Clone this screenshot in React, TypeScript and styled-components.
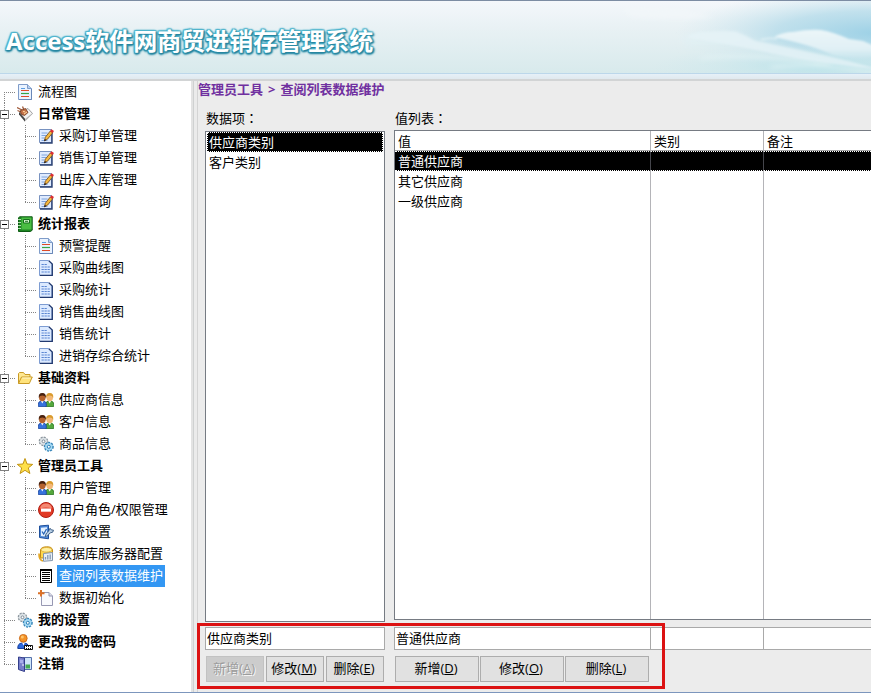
import React, { useState } from "react";
import styled, { createGlobalStyle, css } from "styled-components";

const GlobalStyle = createGlobalStyle`
  *, *::before, *::after { box-sizing: border-box; }
  body {
    margin: 0;
    background: #ececec;
    color: #000;
    font-family: "Open Sans", "Noto Sans CJK SC", sans-serif;
    font-size: 13px;
    line-height: 20px;
  }
  button, input { font: inherit; color: inherit; }
`;

/* ---------- shell ---------- */

const Page = styled.div`
  display: flex;
  flex-direction: column;
  min-height: 100vh;
  border-bottom: 1px solid #7c96bd;
`;

const Header = styled.header`
  position: relative;
  height: 81px;
  padding: 24px 6px 0;
  overflow: hidden;
  border-top: 1px solid #7c8ca3;
  border-bottom: 2px solid #d2d4d5;
  background: linear-gradient(#f4f7fb 0, #e8f1f4 28px, #d8eaec 72px, #bcd7ea 72px, #bcd7ea 73px, #e6f0f8 73px, #e0e9ee 78px);
`;

const Sky = styled.svg`
  position: absolute;
  top: 0;
  right: 0;
  width: 300px;
  height: 72px;
`;

const Title = styled.h1`
  position: relative;
  margin: 0;
  font-size: 24px;
  font-weight: 700;
  line-height: 32px;
  white-space: nowrap;
  color: #fff;
  text-shadow: 1px 1px 1px #27859f, -1px -1px 1px #4fb4cd, 1px -1px 1px #4fb4cd,
    -1px 1px 1px #2f93ae, 0 2px 2px #2a8aa5, 2px 1px 2px #2a8aa5, 0 0 3px #52b6ce,
    0 0 2px #3fa4be;
`;

const Body = styled.div`
  flex: 1;
  display: grid;
  grid-template-columns: 191px 7px minmax(0, 1fr);
`;

const Sidebar = styled.nav`
  background: #fff;
`;

const Splitter = styled.div`
  background: linear-gradient(90deg, #e3e3e3 2px, #cfd1d1 2px, #cfd1d1 3px, #ebebeb 3px, #ebebeb 6px, #d4d4d4 6px);
`;

const Main = styled.main`
  display: flex;
  flex-direction: column;
  padding-bottom: 10px;
`;

/* ---------- tree ---------- */

const TreeList = styled.ul`
  margin: 0;
  padding: 0;
  list-style: none;
`;

const TreeRow = styled.div`
  display: flex;
  align-items: center;
  height: 22px;
`;

type Line = "first" | "mid" | "last" | "through" | "none";

const dotsDown = "repeating-linear-gradient(#848484 0 1px, transparent 1px 2px)";
const dotsAcross = "repeating-linear-gradient(90deg, #848484 0 1px, transparent 1px 2px)";

const Guide = styled.span<{ $line: Line; $child?: boolean }>`
  flex: none;
  display: flex;
  align-items: center;
  width: ${(p) => (p.$child ? 21 : 17)}px;
  height: 22px;
  ${(p) => {
    if (p.$line === "none") return "";
    const x = p.$child ? 8 : 4;
    const top = p.$line === "first" ? 11 : 0;
    const size = p.$line === "first" || p.$line === "last" ? 11 : 22;
    const down = `${dotsDown} ${x}px ${top}px / 1px ${size}px no-repeat`;
    const across = `${dotsAcross} ${x}px 11px / 12px 1px no-repeat`;
    return `background: ${p.$line === "through" ? down : `${down}, ${across}`};`;
  }}
`;

const Toggle = styled.button`
  display: grid;
  place-items: center;
  width: 9px;
  height: 9px;
  padding: 0;
  border: 1px solid #808080;
  background: #fff;
  &::before {
    content: "";
    width: 5px;
    height: 1px;
    background: #000;
  }
`;

const TreeLink = styled.a<{ $bold?: boolean; $active?: boolean }>`
  display: flex;
  align-items: center;
  gap: 3px;
  color: #000;
  font-weight: ${(p) => (p.$bold ? 700 : 400)};
  white-space: nowrap;
  text-decoration: none;
  span {
    height: 22px;
    padding: 0 2px;
    line-height: 20px;
    ${(p) => p.$active && css`background: #3397f3; color: #fff;`}
  }
`;

const Glyph = styled.svg`
  flex: none;
  width: 16px;
  height: 16px;
`;

/* ---------- content ---------- */

const Crumbs = styled.div`
  display: flex;
  gap: 5px;
  height: 17px;
  line-height: 16px;
  font-weight: 700;
  color: #7030a0;
`;

const Columns = styled.div`
  flex: 1;
  display: grid;
  grid-template-columns: 180px minmax(0, 1fr);
  column-gap: 9px;
  padding: 10px 0 0 7px;
`;

const Column = styled.section`
  display: flex;
  flex-direction: column;
`;

const Caption = styled.h2`
  margin: 0;
  padding-left: 1px;
  font-family: "Open Sans", "Noto Sans CJK TC", sans-serif;
  font-size: 13px;
  font-weight: 400;
  line-height: 20px;
`;

const ListBox = styled.ul`
  flex: 1;
  margin: 3px 0 0;
  padding: 0 1px;
  list-style: none;
  border: 1px solid #767b83;
  background: #fff;
`;

const ListItem = styled.button<{ $active: boolean }>`
  display: block;
  width: 100%;
  height: 20px;
  padding: 0 1px;
  border: 1px dotted ${(p) => (p.$active ? "#fff" : "transparent")};
  background: ${(p) => (p.$active ? "#000" : "#fff")};
  color: ${(p) => (p.$active ? "#fff" : "#000")};
  line-height: 18px;
  text-align: left;
`;

const TableBox = styled.div`
  flex: 1;
  display: flex;
  margin: 2px 0;
  border: solid #767b83;
  border-width: 1px 0 1px 1px;
  background: #fff;
`;

const Table = styled.table`
  width: 100%;
  table-layout: fixed;
  border-spacing: 0;
  th, td {
    padding: 0 3px;
    border-right: 1px solid #b4b4b8;
    font-weight: 400;
    text-align: left;
  }
  th:last-child, td:last-child { border-right: 0; }
  th { height: 20px; border-bottom: 1px solid #a8a8a8; line-height: 18px; }
`;

const Col = styled.col<{ $width?: number }>`
  ${(p) => p.$width && `width: ${p.$width}px;`}
`;

const Row = styled.tr<{ $active: boolean }>`
  height: 20px;
  cursor: default;
  td { line-height: 18px; }
  ${(p) =>
    p.$active &&
    css`
      background: #000;
      color: #fff;
      td { border-right-color: #45464c; border-top: 1px dotted #fff; border-bottom: 1px dotted #fff; }
    `}
`;

const Editor = styled.form`
  position: relative;
  display: grid;
  grid-template-columns: 180px minmax(0, 1fr);
  column-gap: 9px;
  row-gap: 6px;
  padding: 5px 0 0 7px;
`;

const Highlight = styled.div`
  position: absolute;
  top: 1px;
  left: -1px;
  width: 468px;
  height: 66px;
  border: 3px solid #dc1212;
  pointer-events: none;
`;

const Field = styled.input`
  min-width: 0;
  width: 100%;
  height: 23px;
  padding: 0 1px 2px;
  border: 1px solid #a9a9a9;
  border-radius: 0;
  outline: 0;
  background: #fff;
`;

const FieldRow = styled.div`
  display: grid;
  grid-template-columns: 257px 113px minmax(0, 1fr);
  ${Field} + ${Field} { border-left: 0; }
  ${Field}:last-child { border-right: 0; }
`;

const Buttons = styled.div<{ $size: number; $gap: number }>`
  display: grid;
  grid-template-columns: repeat(3, ${(p) => p.$size}px);
  column-gap: ${(p) => p.$gap}px;
  padding-left: 1px;
`;

const Button = styled.button`
  height: 26px;
  padding: 0 2px 2px 0;
  border: 1px solid #adadad;
  background: #e1e1e1;
  line-height: 20px;
  white-space: nowrap;
  &:disabled {
    border-color: #c2c2c2;
    background: #cccccc;
    color: #9c9c9c;
    text-shadow: 1px 1px 0 #f4f4f4;
  }
`;

/* ---------- icons ---------- */

const Person = ({ x, hair, skin, shirt, edge }: { x: number; hair: string; skin: string; shirt: string; edge: string }) => (
  <g transform={`translate(${x} 0)`}>
    <path d="M0.5 14.5V12q0-2.5 2.8-3h2.4q2.8.5 2.8 3v2.5z" fill={shirt} stroke={edge} strokeWidth=".8" />
    <path d="M3.2 9 4.5 11.5 5.8 9z" fill="#fff" />
    <ellipse cx="4.5" cy="5.4" rx="3.3" ry="3.8" fill={skin} />
    <path d="M1 6Q.4 1 4.5 1T8 6Q7.200 3.600 4.500 3.600T1 6z" fill={hair} />
  </g>
);

const page = (
  <>
    <path d="M1.500.5h9l4 4v11h-13z" fill="#eaf3ff" stroke="#7f9cc9" />
    <path d="M10.500.5v4h4" fill="#b9d0ee" stroke="#7f9cc9" />
  </>
);

const gears = (
  <>
    <circle cx="5.5" cy="5.3" r="4" fill="#d5dbe0" stroke="#8d979f" strokeWidth="1.6" strokeDasharray="2 1.1" />
    <circle cx="5.5" cy="5.3" r="3.4" fill="#dfe5e9" />
    <circle cx="5.5" cy="5.3" r="1.4" fill="#fff" stroke="#7e8b96" />
    <circle cx="10.8" cy="10.8" r="4.2" fill="#8fc8ea" stroke="#3685b8" strokeWidth="1.6" strokeDasharray="2 1.1" />
    <circle cx="10.8" cy="10.8" r="3.5" fill="#a5daf5" />
    <circle cx="10.8" cy="10.8" r="1.5" fill="#fff" stroke="#2d7eb4" />
  </>
);

const icons: Record<string, React.ReactNode> = {
  flow: (
    <>
      {page}
      <path d="M4 4.500h4" stroke="#5b9be0" />
      <path d="M4 6.500h8M4 12.500h8" stroke="#de4b28" strokeWidth="1.2" />
      <path d="M4 9.500h8" stroke="#35a545" strokeWidth="1.2" />
      <path d="M2 15.500h12.500V5" fill="none" stroke="#6a88b8" />
    </>
  ),
  daily: (
    <>
      <path d="M2.500 6 11 2.500l4.500 5L8.500 14z" fill="#f3f3f3" stroke="#8a8a8a" strokeWidth=".8" />
      <path d="M2 6v2.500L8 15.800V13z" fill="#444" />
      <path d="M8 15.600 15.500 8v-.8L8 13z" fill="#bcbcbc" />
      <path d="M0 1.500 5 4M5.500.5 7 4M.5 4.500 4 6" stroke="#a05a3a" strokeWidth="1.300" />
      <path d="M3.500 4.500 8.500 2.500 11 6.500 7.500 9.500 4 8z" fill="#c7764c" stroke="#6c3218" strokeWidth=".8" />
      <path d="m6 5.500 2 .3M7 8l3-2" stroke="#ffd9a1" />
    </>
  ),
  edit: (
    <>
      <path d="M1.500 1.500h12v13h-12z" fill="#dfebff" stroke="#7892c0" />
      <path d="M2 15h12V4" fill="none" stroke="#2b4172" strokeWidth="1.400" />
      <path d="M3.500 5h6M3.500 7.500h5M3.500 10h3M3.500 12.500h6" stroke="#7fa4dc" />
      <path d="m6.500 12.800.8-3.600 5-6.200 2.400 1.700-5.200 6.500z" fill="#f6b93c" stroke="#69431b" strokeWidth=".8" />
      <path d="m12 3.200 1.400-2 2.600 1.900-1.500 2z" fill="#dc2c31" />
      <path d="m6.200 13.300.6-2.300 1.400 1.100z" fill="#111" />
    </>
  ),
  book: (
    <>
      <path d="M2.500.8h12.700v13.400L13.500 15.500H1.500V2z" fill="#1d8422" stroke="#0d5b13" />
      <path d="M4.500 1.500h10v12h-10z" fill="#49bd42" />
      <path d="M6.500 3.500h6v3.500h-6z" fill="#d9f6d3" stroke="#14701c" />
      <path d="M8 5.300h3" stroke="#14701c" />
      <path d="M1 3.500h3M1 6.500h3M1 9.500h3M1 12.500h3" stroke="#c7e9c4" strokeWidth=".9" />
    </>
  ),
  report: (
    <>
      <path d="M1.500.5h9l3.500 3.500v11.500h-12.500z" fill="#dceaff" stroke="#7d9cd2" />
      <path d="M2 15.300h12.300V4L10.800.8" fill="none" stroke="#223a70" strokeWidth="1.300" />
      <path d="M3.500 4.500h6M3.500 7h9M3.500 9.500h9M3.500 12h9" stroke="#5b86d2" strokeDasharray="2.300 .7" strokeWidth="1.100" />
    </>
  ),
  folder: (
    <>
      <path d="M1.500 13.500v-10l1-1h4l1.500 2h5v3" fill="#ffe892" stroke="#c99a25" />
      <path d="m1.500 13.500 3-6.500h10.800l-3 6.500z" fill="#ffe37c" stroke="#c99a25" />
      <path d="M5.200 8h8.500" stroke="#fff7cf" />
    </>
  ),
  users: (
    <>
      <Person x={7.2} hair="#d99b2d" skin="#f3b878" shirt="#54a83c" edge="#2b7722" />
      <Person x={-0.2} hair="#47210f" skin="#b5622e" shirt="#3672dd" edge="#1c469f" />
    </>
  ),
  gears,
  star: (
    <path d="m8 .5 2 5.500 5.700.4-4.400 3.500 1.600 5.600L8 12.300l-4.900 3.200 1.600-5.600L.3 6.400 6 6z" fill="#ffe04a" stroke="#c29413" strokeLinejoin="round" />
  ),
  deny: (
    <>
      <circle cx="8" cy="8" r="7.500" fill="#e23a25" stroke="#b01d12" />
      <path d="M2 6.500Q3 1.600 8 1.600T14 6.500Q8 4.500 2 6.500z" fill="#f48872" />
      <path d="M3 6.500h10v3.200H3z" fill="#fff" />
    </>
  ),
  settings: (
    <>
      <path d="M1.500 2 10.500 1.200v13.600L1.500 13.500z" fill="#4d88d8" stroke="#1d4f9c" />
      <path d="M3 3.800l6-.6v9.600L3 12z" fill="#e4f1ff" />
      <path d="m4 7.500 1.700 2.500L8.500 5" fill="none" stroke="#2865b5" strokeWidth="1.300" />
      <path d="m7 12.500 1.500-3.500 3-2.800.5-2 1.200 1.600 2.300.4-.8 2-2.400.6-3 3.200z" fill="#b9d0e6" stroke="#34577f" strokeWidth=".9" />
    </>
  ),
  database: (
    <>
      <path d="M2.500 4Q3 1 8.500.8T14.500 4v8H2.500z" fill="#ffd84c" stroke="#c18b18" />
      <ellipse cx="8.500" cy="3.800" rx="5.500" ry="2.300" fill="#fff0a0" stroke="#d5a12b" strokeWidth=".7" />
      <path d="M1 7.500Q1 14.500 5 15" fill="none" stroke="#e4a726" strokeWidth="1.700" />
      <path d="M5.500 7.500 14.500 6.500v8l-9 .8z" fill="#e8eef5" stroke="#8395ab" />
      <path d="M7.500 13.500V11M9.800 13.500V9M12.200 13.500V8.500" stroke="#8499b4" strokeWidth="1.300" />
    </>
  ),
  list: (
    <>
      <path d="M2.500 1.500h11v13h-11z" fill="#fff" stroke="#000" />
      <path d="M2 2h12" stroke="#000" strokeWidth="2" />
      <path d="M4 4.500h8M4 6.500h8M4 8.500h8M4 10.500h8M4 12.500h8" stroke="#000" />
    </>
  ),
  fresh: (
    <>
      <path d="M3.500 2.500h7.500l3.500 3.500v9.500h-11z" fill="#f9fafe" stroke="#9798b3" />
      <path d="M11 2.500V6h3.500" fill="#dcdce9" stroke="#9798b3" />
      <path d="M3 0v6.500M0 3.200h6.500" stroke="#dc7128" strokeWidth="2" />
    </>
  ),
  password: (
    <>
      <path d="M.8 14.500q-.3-5 4-5.500h3q3.200.5 3.500 3v2.500z" fill="#2b67dd" stroke="#173f9a" />
      <path d="m5 8.500 1.500 3 1.500-3z" fill="#fff" />
      <circle cx="6.300" cy="4.300" r="3.900" fill="#f39328" stroke="#c5600c" strokeWidth=".8" />
      <circle cx="5.300" cy="3" r="1.500" fill="#ffc56b" />
      <path d="M7.500 11.500h8v4h-8z" fill="#fff" stroke="#111" />
      <path d="M9 12.500h6M9 14.500h6" stroke="#111" strokeDasharray="1 1" />
    </>
  ),
  logout: (
    <>
      <path d="M6.500 1.500h8v12h-8z" fill="#cfe5fa" stroke="#5470aa" />
      <path d="M8.500 8.500h4.500v4H8.500z" fill="#43a952" />
      <path d="m1.500 1 6 1v13.500l-6-2z" fill="#777fca" stroke="#343e8b" />
      <path d="m3 3.500 3 .5v3.500L3 7z" fill="#a8aeea" />
      <path d="M6 8v2" stroke="#fff" />
    </>
  ),
};

const Icon = ({ name }: { name: string }) => (
  <Glyph viewBox="0 0 16 16" aria-hidden="true">
    {icons[name]}
  </Glyph>
);

const Clouds = () => (
  <Sky viewBox="0 0 300 72" preserveAspectRatio="none" aria-hidden="true">
    <defs>
      <radialGradient id="blue" gradientUnits="userSpaceOnUse" cx="0" cy="0" r="1" gradientTransform="translate(305 32) scale(200 44)">
        <stop offset="0" stopColor="#9dd1e6" />
        <stop offset=".5" stopColor="#b2dae9" stopOpacity=".75" />
        <stop offset="1" stopColor="#cfe7ee" stopOpacity="0" />
      </radialGradient>
      <radialGradient id="teal" gradientUnits="userSpaceOnUse" cx="0" cy="0" r="1" gradientTransform="translate(250 66) scale(170 22)">
        <stop offset="0" stopColor="#b9e2e9" />
        <stop offset="1" stopColor="#cfe9ee" stopOpacity="0" />
      </radialGradient>
      <linearGradient id="cloud" gradientUnits="userSpaceOnUse" x1="0" x2="0" y1="28" y2="60">
        <stop offset="0" stopColor="#e6f2f6" />
        <stop offset="1" stopColor="#d9edf0" stopOpacity="0" />
      </linearGradient>
      <linearGradient id="crest" gradientUnits="userSpaceOnUse" x1="0" x2="0" y1="28" y2="62">
        <stop offset="0" stopColor="#ecf6f9" />
        <stop offset=".6" stopColor="#e0f0f5" />
        <stop offset="1" stopColor="#d2eaf0" stopOpacity="0" />
      </linearGradient>
      <filter id="soft" x="-10%" y="-20%" width="120%" height="140%">
        <feGaussianBlur stdDeviation="1" />
      </filter>
      <filter id="mist" x="-20%" y="-40%" width="140%" height="180%">
        <feGaussianBlur stdDeviation="3 2" />
      </filter>
    </defs>
    <path d="M0 0h300v72H0z" fill="url(#blue)" />
    <path d="M0 44h300v28H0z" fill="url(#teal)" />
    <g filter="url(#mist)">
      <path d="M50 6Q100 2 142 16Q110 20 60 16z" fill="#f2f7f9" opacity=".7" />
      <path d="M110 36Q120 31 140 32L165 31L184 40Q230 48 306 68H120z" fill="url(#cloud)" />
      <path d="M130 57Q190 52 260 64M200 66Q250 62 306 72" fill="none" stroke="#e4f3f5" strokeWidth="3" opacity=".7" />
    </g>
    <g filter="url(#soft)">
      <path d="M116 36Q124 31 134 31Q152 29 165 31Q176 35 184 40Q220 47 256 55Q280 60 306 68Q240 62 190 50Q150 42 116 36z" fill="#e6f3f7" opacity=".75" />
      <path d="M203 36Q212 31 222 31Q238 28 250 29Q262 31 278 38L292 40L306 46V56Q280 58 262 54Q240 44 203 36z" fill="url(#crest)" />
      <path d="M190 39Q198 36 206 38" fill="none" stroke="#e6f3f7" strokeWidth="2" opacity=".6" />
    </g>
  </Sky>
);

/* ---------- data ---------- */

type Node = { label: string; icon: string; bold?: boolean; children?: Node[] };

const tree: Node[] = [
  { label: "流程图", icon: "flow" },
  {
    label: "日常管理", icon: "daily", bold: true,
    children: ["采购订单管理", "销售订单管理", "出库入库管理", "库存查询"].map((label) => ({ label, icon: "edit" })),
  },
  {
    label: "统计报表", icon: "book", bold: true,
    children: [
      { label: "预警提醒", icon: "flow" },
      { label: "采购曲线图", icon: "report" },
      { label: "采购统计", icon: "report" },
      { label: "销售曲线图", icon: "report" },
      { label: "销售统计", icon: "report" },
      { label: "进销存综合统计", icon: "report" },
    ],
  },
  {
    label: "基础资料", icon: "folder", bold: true,
    children: [
      { label: "供应商信息", icon: "users" },
      { label: "客户信息", icon: "users" },
      { label: "商品信息", icon: "gears" },
    ],
  },
  {
    label: "管理员工具", icon: "star", bold: true,
    children: [
      { label: "用户管理", icon: "users" },
      { label: "用户角色/权限管理", icon: "deny" },
      { label: "系统设置", icon: "settings" },
      { label: "数据库服务器配置", icon: "database" },
      { label: "查阅列表数据维护", icon: "list" },
      { label: "数据初始化", icon: "fresh" },
    ],
  },
  { label: "我的设置", icon: "gears", bold: true },
  { label: "更改我的密码", icon: "password", bold: true },
  { label: "注销", icon: "logout", bold: true },
];

const categories = ["供应商类别", "客户类别"];
const values = ["普通供应商", "其它供应商", "一级供应商"];

const Tree = () => {
  const [closed, setClosed] = useState<string[]>([]);
  const [active, setActive] = useState("查阅列表数据维护");
  const flip = (label: string) =>
    setClosed((c) => (c.includes(label) ? c.filter((l) => l !== label) : [...c, label]));
  const link = (node: Node) => (
    <TreeLink
      href="#"
      $bold={node.bold}
      $active={active === node.label}
      aria-current={active === node.label ? "page" : undefined}
      onClick={() => setActive(node.label)}
    >
      <Icon name={node.icon} />
      <span>{node.label}</span>
    </TreeLink>
  );
  return (
    <TreeList>
      {tree.map((node, i) => {
        const line: Line = i === 0 ? "first" : i === tree.length - 1 ? "last" : "mid";
        const open = node.children && !closed.includes(node.label);
        return (
          <li key={node.label}>
            <TreeRow>
              <Guide $line={line}>
                {node.children && (
                  <Toggle type="button" aria-label={node.label} aria-expanded={open} onClick={() => flip(node.label)} />
                )}
              </Guide>
              {link(node)}
            </TreeRow>
            {open && (
              <TreeList>
                {node.children!.map((child, j) => (
                  <li key={child.label}>
                    <TreeRow>
                      <Guide $line={line === "last" ? "none" : "through"} />
                      <Guide $child $line={j === node.children!.length - 1 ? "last" : "mid"} />
                      {link(child)}
                    </TreeRow>
                  </li>
                ))}
              </TreeList>
            )}
          </li>
        );
      })}
    </TreeList>
  );
};

const Command = ({ text, hotkey, disabled }: { text: string; hotkey: string; disabled?: boolean }) => (
  <Button type="button" disabled={disabled} accessKey={hotkey.toLowerCase()}>
    {text}(<u>{hotkey}</u>)
  </Button>
);

export default function App() {
  const [category, setCategory] = useState(categories[0]);
  const [value, setValue] = useState(values[0]);
  return (
    <>
      <GlobalStyle />
      <Page>
        <Header>
          <Clouds />
          <Title>Access软件网商贸进销存管理系统</Title>
        </Header>
        <Body>
          <Sidebar>
            <Tree />
          </Sidebar>
          <Splitter />
          <Main>
            <Crumbs>
              <span>管理员工具</span>
              <span>&gt;</span>
              <span>查阅列表数据维护</span>
            </Crumbs>
            <Columns>
              <Column>
                <Caption>数据项：</Caption>
                <ListBox>
                  {categories.map((c) => (
                    <li key={c}>
                      <ListItem type="button" $active={c === category} onClick={() => setCategory(c)}>
                        {c}
                      </ListItem>
                    </li>
                  ))}
                </ListBox>
              </Column>
              <Column>
                <Caption>值列表：</Caption>
                <TableBox>
                  <Table>
                    <colgroup>
                      <Col $width={256} />
                      <Col $width={113} />
                      <Col />
                    </colgroup>
                    <thead>
                      <tr>
                        <th>值</th>
                        <th>类别</th>
                        <th>备注</th>
                      </tr>
                    </thead>
                    <tbody>
                      {values.map((v) => (
                        <Row key={v} $active={v === value} onClick={() => setValue(v)}>
                          <td>{v}</td>
                          <td />
                          <td />
                        </Row>
                      ))}
                      <tr>
                        <td />
                        <td />
                        <td />
                      </tr>
                    </tbody>
                  </Table>
                </TableBox>
              </Column>
            </Columns>
            <Editor>
              <Field aria-label="数据项" value={category} onChange={(e) => setCategory(e.target.value)} />
              <FieldRow>
                <Field aria-label="值" value={value} onChange={(e) => setValue(e.target.value)} />
                <Field aria-label="类别" />
                <Field aria-label="备注" />
              </FieldRow>
              <Buttons $size={58} $gap={2}>
                <Command text="新增" hotkey="A" disabled />
                <Command text="修改" hotkey="M" />
                <Command text="删除" hotkey="E" />
              </Buttons>
              <Buttons $size={84} $gap={1}>
                <Command text="新增" hotkey="D" />
                <Command text="修改" hotkey="O" />
                <Command text="删除" hotkey="L" />
              </Buttons>
              <Highlight />
            </Editor>
          </Main>
        </Body>
      </Page>
    </>
  );
}
